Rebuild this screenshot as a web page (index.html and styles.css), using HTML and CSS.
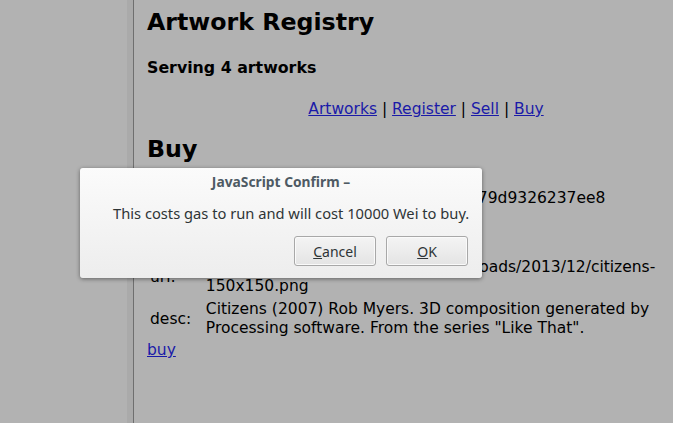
FILE: index.html
```html
<!DOCTYPE html>
<html>
<head>
<meta charset="utf-8">
<link rel="stylesheet" href="styles.css">
</head>
<body>
<div class="page">
  <div class="sidebar"></div>
  <div class="strip"></div>
  <div class="main">
    <h1 class="title">Artwork Registry</h1>
    <h3 class="serving">Serving 4 artworks</h3>
    <div class="nav"><a href="#">Artworks</a> | <a href="#">Register</a> | <a href="#">Sell</a> | <a href="#">Buy</a></div>
    <h2 class="buy-h">Buy</h2>
    <table class="details">
      <tr><td class="lbl">owner:</td><td class="val">0x5d1c8e2fa07b4e9d8c6a2b1f0e479d9326237ee8</td></tr>
      <tr><td class="lbl">title:</td><td class="val">Citizens</td></tr>
      <tr><td class="lbl">price:</td><td class="val">10000</td></tr>
      <tr><td class="lbl">url:</td><td class="val">http://robmyers.org/wp-content/uploads/2013/12/citizens-<br>150x150.png</td></tr>
      <tr><td class="lbl">desc:</td><td class="val">Citizens (2007) Rob Myers. 3D composition generated by<br>Processing software. From the series "Like That".</td></tr>
    </table>
    <a class="buy-link" href="#">buy</a>
  </div>
</div>
<div class="dialog">
  <div class="dlg-title">JavaScript Confirm –</div>
  <div class="dlg-msg">This costs gas to run and will cost 10000 Wei to buy.</div>
  <div class="dlg-buttons">
    <button class="btn"><u>C</u>ancel</button>
    <button class="btn"><u>O</u>K</button>
  </div>
</div>
</body>
</html>
```
FILE: styles.css
```css
html, body {
  margin: 0;
  padding: 0;
  height: 100%;
  overflow: hidden;
}
body {
  background: #b2b2b2;
  font-family: "DejaVu Sans", sans-serif;
  font-size: 15.5px;
  color: #000;
}
.page {
  display: flex;
  height: 423px;
}
.sidebar {
  flex: 0 0 127px;
  background: #b2b2b2;
}
.strip {
  flex: 0 0 6px;
  background: #aaaaaa;
  border-right: 1px solid #6f6f6f;
}
.main {
  flex: 1;
  min-width: 0;
  padding-left: 13px;
}
.title {
  font-size: 23.7px;
  font-weight: bold;
  margin: 8px 0 0 0;
  line-height: 28px;
}
.serving {
  font-size: 15.8px;
  font-weight: bold;
  margin: 22px 0 0 0;
  line-height: 19px;
}
.nav {
  width: 558px;
  text-align: center;
  margin: 23px 0 0 0;
  line-height: 19px;
}
a {
  color: #1a1aa8;
}
.buy-h {
  font-size: 23.7px;
  font-weight: bold;
  margin: 17px 0 0 0;
  line-height: 26px;
}
.details {
  border-collapse: separate;
  border-spacing: 2px;
  margin: 24px 0 0 -2px;
  white-space: nowrap;
}
.details td {
  padding: 1px;
  vertical-align: middle;
  line-height: 19px;
}
.lbl {
  text-align: left;
  padding-left: 3px !important;
  padding-right: 0 !important;
}
.buy-link {
  display: block;
  line-height: 19px;
}
.dialog {
  position: absolute;
  left: 80px;
  top: 168px;
  width: 402px;
  height: 110px;
  background: linear-gradient(#fbfbfb, #ededed);
  border-radius: 3px;
  box-shadow: 0 1px 4px rgba(0,0,0,0.45);
  font-family: "Noto Sans", sans-serif;
  display: flex;
  flex-direction: column;
}
.dlg-title {
  text-align: center;
  font-weight: bold;
  font-size: 13.8px;
  color: #4e5a64;
  margin-top: 4px;
  line-height: 19px;
}
.dlg-msg {
  font-size: 14.7px;
  color: #2e3436;
  margin: 13px 0 0 33px;
  line-height: 19px;
}
.dlg-buttons {
  display: flex;
  justify-content: flex-end;
  gap: 10px;
  padding-right: 14px;
  margin-top: 13px;
}
.btn {
  width: 82px;
  height: 30px;
  font-family: "Noto Sans", sans-serif;
  font-size: 14px;
  color: #2e3436;
  background: linear-gradient(#f4f4f4, #e4e4e4);
  border: 1px solid #a8a8a8;
  border-radius: 3px;
  box-shadow: inset 0 0 0 1px #fafafa;
  padding: 0;
}
```
